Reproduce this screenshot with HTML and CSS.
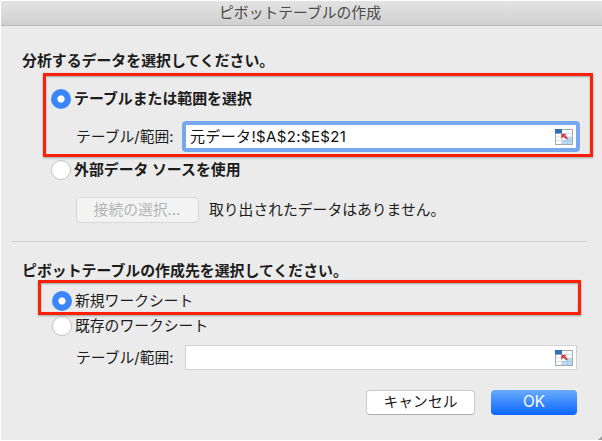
FILE: index.html
```
<!DOCTYPE html>
<html lang="ja">
<head>
<meta charset="utf-8">
<title>ピボットテーブルの作成</title>
<link rel="stylesheet" href="styles.css">
</head>
<body>
<svg class="defs" width="0" height="0" aria-hidden="true">
  <symbol id="range" viewBox="0 0 18 16">
    <rect x=".5" y=".5" width="17" height="15" fill="#fafbfd" stroke="#a3a9b3"/>
    <path d="M6.5 1v14M12 1v14M1 4.500h16M1 8h16M1 11.500h16" stroke="#dde2ea" fill="none"/>
    <path d="M12 8h5v7H7v-3.500h5z" fill="#b9d8f2"/>
    <path d="M12.500 8v7M7 11.500h10" stroke="#a9cbea" fill="none"/>
    <path d="M0 0h7v4.500H0z" fill="#2f6fb5"/>
    <path d="M6.300 4.800h5L10.200 6.200l2.600 3-1.400 1.300-3-2.700-2.100 2z" fill="#d2404a"/>
  </symbol>
</svg>
<div class="window">
  <header class="titlebar"><span>ピボットテーブルの作成</span></header>
  <main class="content">
    <h2 class="heading">分析するデータを選択してください。</h2>
    <section class="group">
      <div class="option strong"><i class="radio on"></i><span>テーブルまたは範囲を選択</span></div>
      <div class="field-row">
        <span class="field-label">テーブル/範囲:</span>
        <div class="field focused"><span class="value">元データ!$A$2:$E$21</span><svg class="picker"><use href="#range"/></svg></div>
      </div>
      <div class="mark"></div>
    </section>
    <div class="option strong external"><i class="radio"></i><span>外部データ ソースを使用</span></div>
    <div class="connection">
      <div class="button disabled">接続の選択...</div>
      <span>取り出されたデータはありません。</span>
    </div>
    <hr class="divider">
    <h2 class="heading second">ピボットテーブルの作成先を選択してください。</h2>
    <section class="group sheet">
      <div class="option"><i class="radio on"></i><span>新規ワークシート</span></div>
      <div class="mark"></div>
    </section>
    <div class="option existing"><i class="radio"></i><span>既存のワークシート</span></div>
    <div class="field-row lower">
      <span class="field-label">テーブル/範囲:</span>
      <div class="field"><span class="value"></span><svg class="picker"><use href="#range"/></svg></div>
    </div>
    <footer class="actions">
      <div class="button cancel">キャンセル</div>
      <div class="button primary">OK</div>
    </footer>
  </main>
  <i class="corner"></i>
</div>
</body>
</html>
```
FILE: styles.css
```
* { box-sizing: border-box; }
body {
  margin: 0;
  background: #fff;
  color: #1c1c1c;
  font: 14.8px/20px Inter, "Noto Sans CJK JP", sans-serif;
}
.defs { position: absolute; }
.window {
  position: relative;
  width: 601px;
  height: 439px;
  margin: 1px 0 0 1px;
  overflow: hidden;
  background: #ebebeb;
}
.titlebar {
  display: flex;
  justify-content: center;
  align-items: center;
  height: 25px;
  padding-right: 3px;
  border-bottom: 1px solid #b9b9b9;
  background: linear-gradient(#e3e3e3, #d0d0d0);
  color: #4a4a4a;
}
.content { display: flex; flex-direction: column; padding: 25px 0 0 21px; }
.heading { margin: 0; height: 20px; font-size: 14.9px; line-height: 20px; font-weight: 700; white-space: nowrap; }
.group { position: relative; margin-top: 18px; }
.option { display: flex; align-items: center; gap: 3px; height: 20px; padding-left: 29px; }
.strong { font-weight: 700; font-size: 14.9px; }
.radio {
  flex: none;
  width: 20px;
  height: 20px;
  border: 1px solid #c4c4c4;
  border-radius: 50%;
  background: #fff;
}
.radio.on { border: 0; background: radial-gradient(circle, #fff 3.2px, #3a86fa 4px); }
.field-row { display: flex; align-items: center; height: 31px; margin-top: 12px; padding-left: 54px; }
.field-label { width: 106px; white-space: nowrap; }
.field {
  display: flex;
  align-items: center;
  justify-content: space-between;
  width: 392px;
  height: 25px;
  margin-left: 3px;
  padding: 0 3px;
  border: 1px solid #d2d2d2;
  background: #fff;
}
.field.focused {
  width: 398px;
  height: 31px;
  margin-left: 0;
  border: 4px solid #79a7ef;
  border-radius: 4px;
}
.value { padding-left: 1px; font-size: 15px; letter-spacing: .36px; color: #111; }
.picker { width: 18px; height: 16px; }
.mark {
  position: absolute;
  inset: -16px auto auto 21px;
  width: 550px;
  height: 84px;
  border: 3px solid #fd2006;
  box-shadow: 0 1px 2px #9aa5a5, inset 0 1px 2px #9aa5a5;
}
.external { margin-top: 8px; }
.connection { display: flex; align-items: center; gap: 10px; height: 26px; margin-top: 17px; padding-left: 54px; }
.button {
  display: flex;
  align-items: center;
  justify-content: center;
  height: 25px;
  border: 1px solid #c6c6c6;
  border-radius: 4px;
  background: #fff;
  white-space: nowrap;
}
.disabled { width: 123px; height: 26px; padding-right: 1px; border-color: #d8d8d8; background: #f3f3f3; color: #b5b5b5; }
.divider { width: 575px; height: 1px; margin: 18px 0 0 -10px; border: 0; background: #cfcfcf; }
.second { margin-top: 19px; }
.sheet { margin-top: 10px; }
.sheet .option, .existing { padding-left: 30px; gap: 3px; }
.sheet .mark { inset: -11px auto auto 16px; width: 543px; height: 35px; }
.existing { margin-top: 5px; }
.lower { height: 25px; margin-top: 9px; }
.actions { display: flex; gap: 16px; margin: 20px 0 0 344px; }
.cancel { width: 109px; padding-bottom: 2px; border-color: #cacaca; border-bottom-color: #adadad; }
.primary { width: 86px; padding-bottom: 1px; border: 0; background: linear-gradient(#6aabfb, #0a66ff); color: #fff; font-size: 15.3px; }
.corner { position: absolute; right: 0; bottom: 0; border: 2px solid; border-color: transparent #999 #999 transparent; }
```
